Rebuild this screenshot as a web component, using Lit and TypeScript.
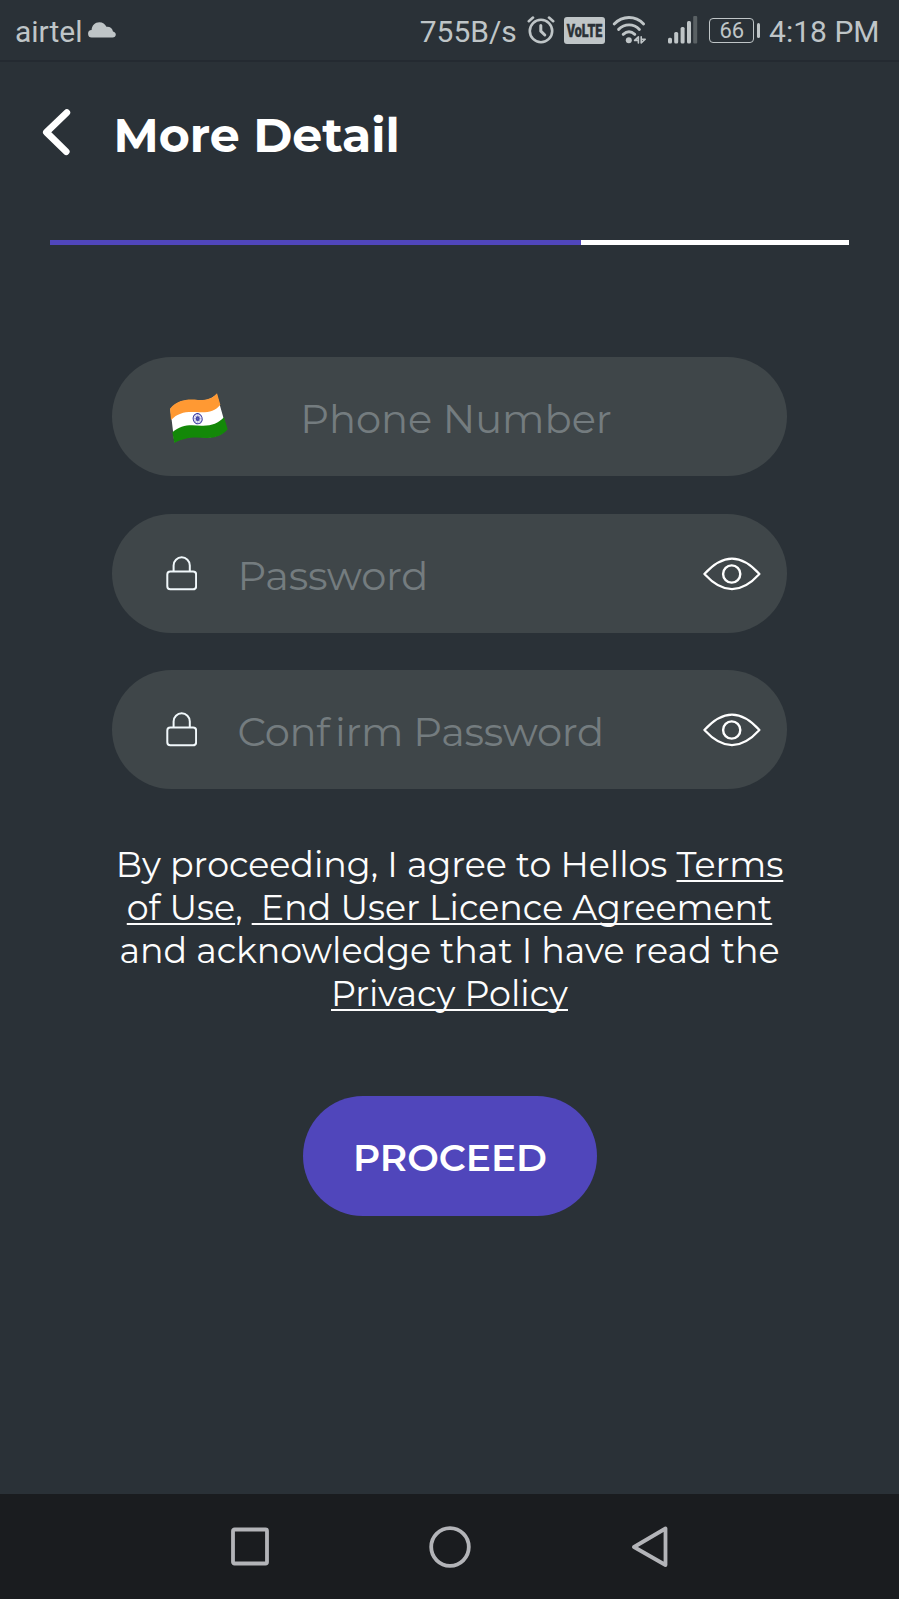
import { LitElement, html, css, nothing } from "lit";
import { customElement, property } from "lit/decorators.js";

@customElement("status-bar")
class StatusBar extends LitElement {
  static styles = css`
    :host { display: block; }
    .bar {
      display: flex; align-items: center; box-sizing: border-box;
      height: 62px; padding: 3px 19.500px 0 15px;
      border-bottom: 2px solid #242a31;
      color: #bfc5c7; font: 400 30px/36px Roboto, "Noto Sans", sans-serif;
      white-space: nowrap;
    }
    svg { display: block; flex: none; }
    .cloud { margin: 0 auto 4px 5px; }
    .alarm { margin: 0 0 3px 10px; }
    .volte {
      box-sizing: border-box; width: 41px; height: 27px; margin: 0 0 3px 9px;
      border-radius: 3px; background: #bfc5c7; overflow: visible;
    }
    .wifi { margin: 0 0 3px 7px; }
    .signal { margin: 0 0 3px 20px; }
    .battery {
      display: flex; align-items: center; margin: 0 9px 3px 11.500px;
    }
    .cell {
      box-sizing: border-box; width: 45px; height: 25px;
      border: 1.6px solid #bfc5c7; border-radius: 4px;
      font-size: 22px; line-height: 23px; text-align: center;
    }
    .nub { width: 3.4px; height: 15px; margin-left: 2.4px; border-radius: 1.5px; background: #bfc5c7; }
  `;
  render() {
    return html`
      <div class="bar">
        <span>airtel</span>
        <svg class="cloud" width="28" height="16" viewBox="0 0 28 16" fill="#bfc5c7">
          <path d="M4 15.400A3.700 3.700 0 0 1 3.600 8C3.800 3.400 7 .2 11.400.2c3.200 0 5.800 1.700 7 4.600 3.600-.4 6 1.700 6.600 4.600 1.800.5 2.800 1.500 2.800 3 0 1.800-1.400 3-3.200 3z" />
        </svg>
        <span>755B/s</span>
        <svg class="alarm" width="28" height="28" viewBox="0 0 28 28" fill="none" stroke="#bfc5c7" stroke-width="2.600" stroke-linecap="round" stroke-linejoin="round">
          <circle cx="14" cy="15" r="11.200" />
          <path d="M1.800 5.200 6 1.600M26.200 5.200 22 1.600" />
          <path d="M13.800 9.400v5.800l4 3.800" stroke-width="3" />
        </svg>
        <svg class="volte" width="41" height="27" viewBox="0 0 41 27">
          <text x="2.800" y="20.200" textLength="35.500" lengthAdjust="spacingAndGlyphs" font-family="Roboto, sans-serif" font-weight="900" font-size="18.500" fill="#2a3137" stroke="#2a3137" stroke-width="0.500">VoLTE</text>
        </svg>
        <svg class="wifi" width="35" height="28" viewBox="0 0 35 28" fill="none" stroke="#bfc5c7" stroke-width="2.900" stroke-linecap="round">
          <path d="M2.200 8C10.500-.6 23.500-.6 31.600 8M6.600 13.400c6-6 15-6 20.800 0M11.200 18.400c3.600-3.200 8-3.200 11.600 0" />
          <circle cx="16.800" cy="24.200" r="3" fill="#bfc5c7" stroke="none" />
          <path d="M26.400 27v-6.200L22.600 24.400h3.600M29.200 20.800v6.200l4-3.800h-3.600" stroke-width="1.600" stroke-linejoin="round" />
        </svg>
        <svg class="signal" width="31" height="28" viewBox="0 0 31 28" fill="#bfc5c7">
          <rect x="1" y="21.800" width="4" height="5.600" rx="1.500" />
          <rect x="7.200" y="16" width="4" height="11.400" rx="1.500" />
          <rect x="13.600" y="11" width="4" height="16.400" rx="1.500" />
          <rect x="20" y="5" width="4" height="22.400" rx="1.500" />
          <rect x="26.200" y="0" width="4" height="27.400" rx="1" fill="#5a6164" />
        </svg>
        <div class="battery"><div class="cell">66</div><div class="nub"></div></div>
        <span>4:18 PM</span>
      </div>
    `;
  }
}

@customElement("form-field")
class FormField extends LitElement {
  @property() label = "";
  @property() kind = "password";
  static styles = css`
    :host { display: block; }
    .field {
      display: flex; align-items: center; box-sizing: border-box;
      height: 119px; border-radius: 60px; background: #3f4649;
      padding: 0 25.500px 0 53.500px; color: #747c7f;
      font: 400 40px/48px Montserrat, Inter, sans-serif; white-space: nowrap;
      font-variant-ligatures: none;
    }
    svg { display: block; flex: none; }
    .label { margin: 5px auto 0 41px; letter-spacing: -0.25px; }
    .loose { letter-spacing: 5px; }
    .phone .label { margin-left: 70.500px; letter-spacing: 0; }
    .flag { margin: 3px 0 0 2.500px; }
    .eye { margin-top: 1px; }
  `;
  private spaced(text: string) {
    const at = text.indexOf("fi");
    return at < 0
      ? text
      : html`${text.slice(0, at)}<span class="loose">f</span>${text.slice(at + 1)}`;
  }
  render() {
    const phone = this.kind === "phone";
    return html`
      <div class="field ${this.kind}">
        ${phone
          ? html`<svg class="flag" width="61.700" height="54" viewBox="205 125 185 162">
              <path fill="#fff" d="M212 179C236 151 265 150 295 153c24 1 40-3 56-19l30 106c-17 19-38 25-62 24-34-3-62-4-95 15z" />
              <path fill="#ff9933" d="M211 178C236 150 265 149 295 152c24 1 42-3 57-20l10 34c-16 19-34 24-62 23-36-3-62-2-86 23z" />
              <path fill="#138808" d="M218 249c26-24 52-23 87-20 30 1 50-6 68-25l11 36c-17 20-40 27-64 26-34-3-62-4-96 15z" />
              <ellipse cx="294" cy="208" rx="13.500" ry="15.500" fill="#e6e6f5" stroke="#34349c" stroke-width="2.800" transform="rotate(-15 294 208)" />
              <ellipse cx="294" cy="208" rx="6" ry="7" fill="#34349c" />
              <path stroke="#6c6cb8" stroke-width="1.200" d="M294 194v28M281 208h26M285 198l18 20M303 198l-18 20" />
            </svg>`
          : html`<svg width="31" height="35" viewBox="0 0 31 35" fill="none" stroke="#f1f8fb" stroke-width="2">
              <rect x="1.300" y="15.500" width="28.800" height="17.800" rx="3" />
              <path d="M7.600 15.500V9.400a8.100 8.100 0 0 1 16.200 0v6.100" />
            </svg>`}
        <span class="label">${this.spaced(this.label)}</span>
        ${phone
          ? nothing
          : html`<svg class="eye" width="58" height="36" viewBox="0 0 58 36" fill="none" stroke="#fff" stroke-width="2.200">
              <path stroke-linejoin="round" d="M1.400 18C20-2.600 38-2.600 56.400 18 38 38.200 20 38.200 1.400 18z" />
              <circle cx="28.700" cy="18" r="8.600" stroke-width="2.400" />
            </svg>`}
      </div>
    `;
  }
}

@customElement("app-root")
class AppRoot extends LitElement {
  static styles = css`
    :host {
      display: flex; flex-direction: column; height: 1599px; overflow: hidden;
      background: #2a3137; color: #fff;
      font-family: Montserrat, Inter, sans-serif;
    }
    .header { display: flex; align-items: center; height: 60px; padding: 43px 0 0 41px; }
    .header svg { display: block; margin: 0 42.500px 6px 0; }
    .title { margin: 0; font-size: 47.400px; line-height: 60px; font-weight: 700; white-space: nowrap; }
    .progress { height: 5px; margin: 75px 50px 0; background: #fff; }
    .done { height: 100%; background: #5046bb; }
    .fields { display: flex; flex-direction: column; gap: 37.600px; margin: 112px 112.500px 0 112px; }
    .terms {
      margin: 53.500px 0 0; text-align: center; white-space: nowrap;
      font-size: 34.850px; line-height: 43.250px; color: #fdfdfd;
    }
    .link {
      text-decoration: underline; text-decoration-thickness: 2.300px;
      text-underline-offset: 2.600px; text-decoration-skip-ink: none;
    }
    .proceed {
      align-self: center; display: block; box-sizing: border-box; width: 294px; height: 120px; flex: none;
      margin-top: 80.500px; padding: 3px 0 0 1px; border: 0; border-radius: 60px;
      background: #5046bb; color: #fff; font: 600 37.500px/46px Montserrat, Inter, sans-serif;
    }
    .nav {
      display: flex; align-items: center; justify-content: space-between; box-sizing: border-box;
      height: 105px; margin-top: auto; padding: 0 229.500px; background: #1a1c1f; flex: none;
    }
    .nav svg { display: block; }
  `;
  private progress = 66.5;
  render() {
    return html`
      <status-bar></status-bar>
      <div class="header">
        <svg width="30" height="48" viewBox="0 0 30 48" fill="none" stroke="#fff" stroke-width="6.800" stroke-linecap="round" stroke-linejoin="round">
          <path d="M25.800 4.600 5.400 24.200 25.200 43.600" />
        </svg>
        <h1 class="title">More Detail</h1>
      </div>
      <div class="progress"><div class="done" style="width:${this.progress}%"></div></div>
      <div class="fields">
        <form-field kind="phone" label="Phone Number"></form-field>
        <form-field label="Password"></form-field>
        <form-field label="Confirm Password"></form-field>
      </div>
      <p class="terms">
        By proceeding, I agree to Hellos <span class="link">Terms</span><br />
        <span class="link">of Use</span>, <span class="link">&nbsp;End User Licence Agreement</span><br />
        and acknowledge that I have read the<br />
        <span class="link">Privacy Policy</span>
      </p>
      <button class="proceed">PROCEED</button>
      <div class="nav">
        <svg width="40" height="42" viewBox="0 0 40 42" fill="none" stroke="#b3b4b8" stroke-width="3.800">
          <rect x="3" y="3.500" width="34" height="34" rx="1.500" />
        </svg>
        <svg width="42" height="42" viewBox="0 0 42 42" fill="none" stroke="#b3b4b8" stroke-width="3.800">
          <circle cx="21" cy="21" r="18.800" />
        </svg>
        <svg width="40" height="42" viewBox="0 0 40 42" fill="none" stroke="#b3b4b8" stroke-width="3.800" stroke-linejoin="round">
          <path d="M35.500 2.500v36.500L4 21z" />
        </svg>
      </div>
    `;
  }
}
